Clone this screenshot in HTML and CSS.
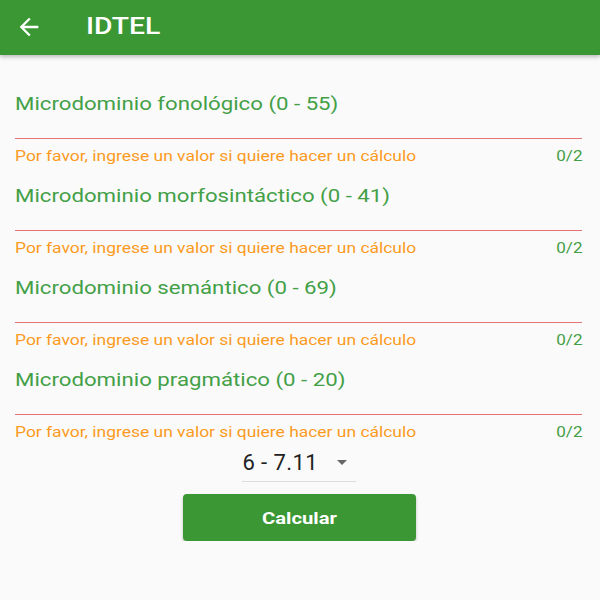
FILE: index.html
```html
<!DOCTYPE html>
<html lang="es">
<head>
<meta charset="utf-8">
<title>IDTEL</title>
<link rel="stylesheet" href="styles.css">
</head>
<body>
<header class="appbar">
  <svg class="back" viewBox="0 0 24 24" width="28" height="28"><path fill="#fff" d="M20 11H7.83l5.59-5.59L12 4l-8 8 8 8 1.41-1.41L7.83 13H20v-2z"/></svg>
  <h1 class="title"><span class="wide">IDTEL</span></h1>
</header>
<main class="content">
  <div class="field">
    <div class="label"><span class="wide">Microdominio fonológico (0 - 55)</span></div>
    <div class="line"></div>
    <div class="helper"><span class="msg wide">Por favor, ingrese un valor si quiere hacer un cálculo</span><span class="count">0/2</span></div>
  </div>
  <div class="field">
    <div class="label"><span class="wide">Microdominio morfosintáctico (0 - 41)</span></div>
    <div class="line"></div>
    <div class="helper"><span class="msg wide">Por favor, ingrese un valor si quiere hacer un cálculo</span><span class="count">0/2</span></div>
  </div>
  <div class="field">
    <div class="label"><span class="wide">Microdominio semántico (0 - 69)</span></div>
    <div class="line"></div>
    <div class="helper"><span class="msg wide">Por favor, ingrese un valor si quiere hacer un cálculo</span><span class="count">0/2</span></div>
  </div>
  <div class="field">
    <div class="label"><span class="wide">Microdominio pragmático (0 - 20)</span></div>
    <div class="line"></div>
    <div class="helper"><span class="msg wide">Por favor, ingrese un valor si quiere hacer un cálculo</span><span class="count">0/2</span></div>
  </div>
  <div class="select-wrap">
    <div class="select"><span class="value">6 - 7.11</span><span class="caret"></span></div>
  </div>
  <div class="btn-wrap">
    <button class="btn"><span class="btn-text">Calcular</span></button>
  </div>
</main>
</body>
</html>
```
FILE: styles.css
```css
html, body {
  margin: 0;
  padding: 0;
  background: #fafafa;
  font-family: Roboto, "Noto Sans", sans-serif;
}
.wide {
  display: inline-block;
  transform-origin: left center;
  white-space: nowrap;
}
.appbar {
  height: 55px;
  background: #3a9733;
  display: flex;
  align-items: center;
  padding-left: 15px;
  box-shadow: 0 2px 4px rgba(0,0,0,0.25);
  position: relative;
}
.back {
  display: block;
  margin-top: -2px;
}
.title {
  margin: -3px 0 0 43px;
  color: #fff;
  font-size: 24px;
  font-weight: 500;
}
.title .wide { transform: scaleX(1.18); }
.content {
  padding: 37px 18px 0 15px;
}
.field {
  margin-bottom: 18px;
}
.label {
  font-size: 18px;
  line-height: 24px;
  color: #43a047;
}
.label .wide { transform: scaleX(1.234); }
.line {
  margin-top: 22px;
  height: 1px;
  background: #e57373;
}
.helper {
  margin-top: 7px;
  display: flex;
  justify-content: space-between;
  font-size: 14px;
  line-height: 20px;
}
.msg { color: #fb9a1e; }
.helper .wide { transform: scaleX(1.245); }
.count {
  color: #43a047;
  display: inline-block;
  transform: scaleX(1.22);
  transform-origin: right center;
  margin-right: -1px;
}
.select-wrap {
  display: flex;
  justify-content: center;
  margin-top: -16px;
}
.select {
  display: flex;
  align-items: center;
  width: 114px;
  height: 38px;
  box-sizing: border-box;
  border-bottom: 1px solid #dcdcdc;
  padding-left: 1px;
}
.value {
  font-size: 22px;
  letter-spacing: 0.4px;
  color: #222;
  flex: 1;
}
.caret {
  width: 0;
  height: 0;
  border-left: 5px solid transparent;
  border-right: 5px solid transparent;
  border-top: 5px solid #666;
  margin-right: 9px;
}
.btn-wrap {
  display: flex;
  justify-content: center;
  margin-top: 12px;
}
.btn {
  width: 233px;
  height: 47px;
  border: none;
  border-radius: 4px;
  background: #3a9733;
  color: #fff;
  font-family: Roboto, sans-serif;
  font-size: 17px;
  font-weight: 700;
  box-shadow: 0 2px 3px rgba(0,0,0,0.25);
  margin-left: 1px;
}
.btn-text {
  display: inline-block;
  transform: scaleX(1.19);
}
```
